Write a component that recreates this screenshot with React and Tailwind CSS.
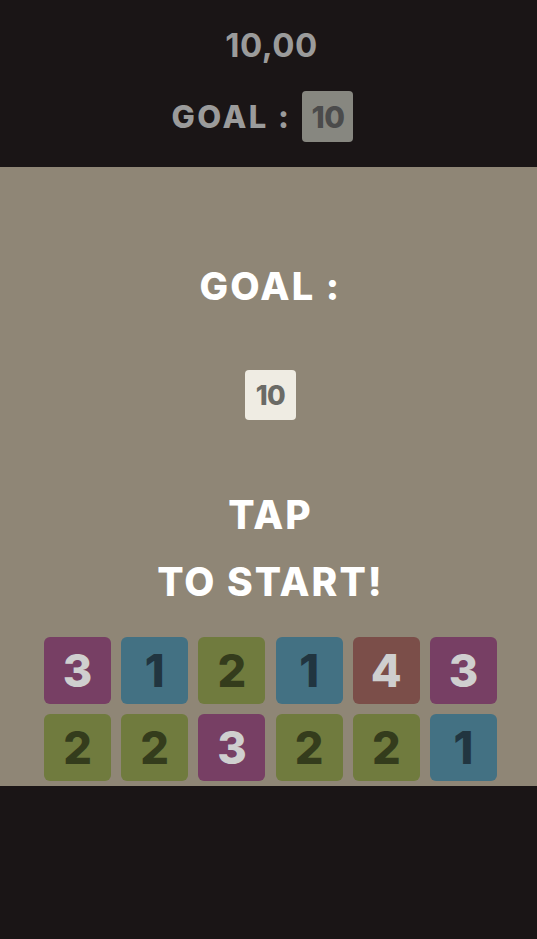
import React from "react";

const tiles = [
  [3, "m"], [1, "b"], [2, "g"], [1, "b"], [4, "r"], [3, "m"],
  [2, "g"], [2, "g"], [3, "m"], [2, "g"], [2, "g"], [1, "b"],
];

function Tile({ n, c }) {
  const cls =
    c === "m"
      ? "bg-[#773f64] text-[#cfcfcf]"
      : c === "b"
      ? "bg-[#437183] text-[#213540]"
      : c === "g"
      ? "bg-[#707b3e] text-[#343c1c]"
      : "bg-[#7b4e49] text-[#cfcfcf]";
  return (
    <div className={`w-[67px] h-[67px] rounded-[6px] flex items-center justify-center text-[45px] font-extrabold leading-none ${cls}`}>
      {n}
    </div>
  );
}

export default function App() {
  return (
    <div
      className="w-[537px] h-[939px] flex flex-col bg-[#1a1516]"
      style={{ fontFamily: "Inter, 'Noto Sans', sans-serif" }}
    >
      <div className="h-[167px] shrink-0 flex flex-col items-center pt-[29px]">
        <div className="pl-[6px] text-[33px] font-bold text-[#9b9b9b] leading-none tracking-[0.5px]">10,00</div>
        <div className="mt-[29px] flex items-center gap-[11px] pr-[12px]">
          <span className="text-[31px] font-extrabold text-[#9b9b9b] leading-none tracking-[2.5px]">GOAL :</span>
          <span className="w-[51px] h-[51px] rounded-[4px] bg-[#878780] text-[#4b4b4b] text-[30px] font-extrabold flex items-center justify-center leading-none tracking-[-0.5px]">10</span>
        </div>
      </div>
      <div className="h-[619px] shrink-0 bg-[#8f8676] flex flex-col items-center pl-[4px]">
        <div className="shrink-0 mt-[100px] text-[38px] font-extrabold text-white leading-none tracking-[2.2px]">GOAL :</div>
        <div className="shrink-0 mt-[65px] w-[51px] h-[50px] rounded-[4px] bg-[#efece3] text-[#6b6b66] text-[27px] font-extrabold flex items-center justify-center leading-none tracking-[-0.5px]">10</div>
        <div className="shrink-0 mt-[61px] text-[39px] font-extrabold text-white leading-[67px] text-center tracking-[2px]">
          TAP
          <br />
          TO START!
        </div>
        <div className="shrink-0 mt-[22px] grid grid-cols-6 gap-x-[10.2px] gap-y-[10px]">
          {tiles.map(([n, c], i) => (
            <Tile key={i} n={n} c={c} />
          ))}
        </div>
      </div>
      <div className="flex-1" />
    </div>
  );
}
